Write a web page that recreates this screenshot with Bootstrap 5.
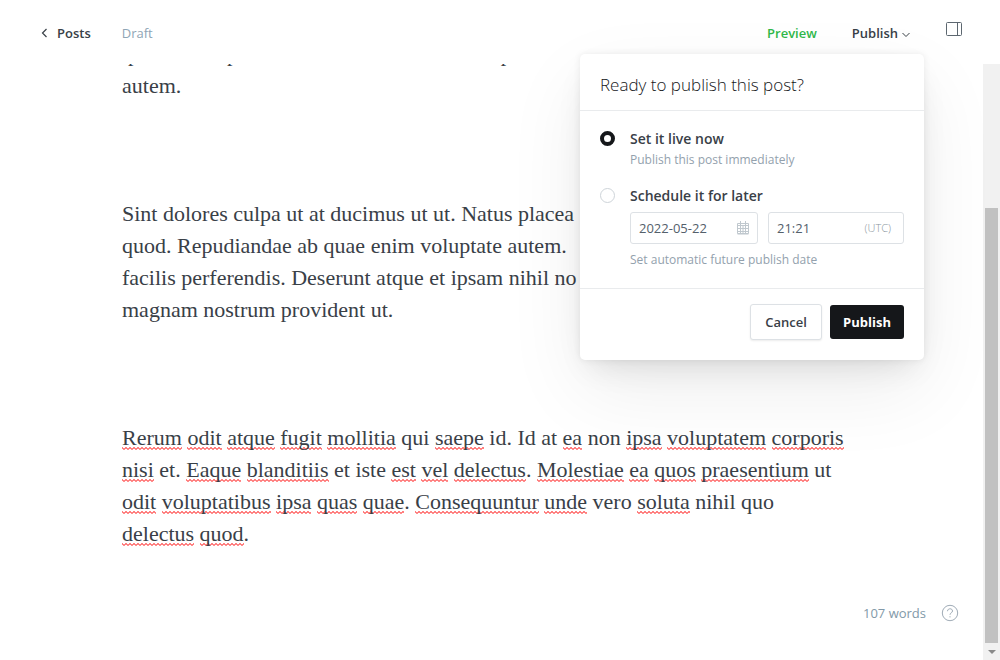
<!DOCTYPE html>
<html lang="en">
<head>
<meta charset="utf-8">
<meta name="viewport" content="width=device-width, initial-scale=1">
<title>Edit post</title>
<link rel="stylesheet" href="https://cdn.jsdelivr.net/npm/bootstrap@5.3.0/dist/css/bootstrap.min.css">
<style>
body { font-family: "Open Sans", "Noto Sans", sans-serif; font-size: 13px; line-height: 20px; color: #394047; background: #fff; }
svg { display: block; flex: none; }
a { text-decoration: none; }
.top-bar { height: 64px; padding: 2px 38px 0 41px; }
.nav-item-text { font-weight: 600; color: #394047; }
.preview-link { font-weight: 600; color: #30b84a; }
.draft-label { color: #8fa5b5; margin-left: 31px; }
.publish-wrap { padding-right: 14px; margin-left: 35px; }
.panel-btn { margin-left: 22px; margin-bottom: 8px; }
.plain-btn { background: none; border: 0; padding: 0; }
.editor-body { padding: 0 122px 110px 122px; font: 22px/32px "Liberation Serif", serif; color: #394047; }
.editor-body p { margin: 0 0 96px; white-space: nowrap; }
.editor-body p:last-child { margin-bottom: 0; }
.misspelt { text-decoration: none; background: url("data:image/svg+xml,%3Csvg xmlns='http://www.w3.org/2000/svg' width='4' height='3'%3E%3Cpath d='M-1 -.5L2 2.5L5 -.5' fill='none' stroke='%23f00' stroke-width='1'/%3E%3C/svg%3E") repeat-x left bottom; }
.publish-menu { top: 52px; right: 0; width: 344px; z-index: 10; background: #fff; border-radius: 5px; box-shadow: 0 0 7px rgba(0,0,0,.08), 0 30px 80px rgba(0,0,0,.07), 0 14px 30px -10px rgba(0,0,0,.12); }
.menu-head { padding: 19px 20px 14px; font-size: 17px; font-weight: 300; line-height: 23px; color: #15171a; border-bottom: 1px solid #e9ebed; }
.menu-body { padding: 18px 20px; border-bottom: 1px solid #e9ebed; }
.menu-foot { padding: 15px 20px 20px; }
.choice { gap: 15px; margin-bottom: 16px; }
.choice:last-child { margin-bottom: 0; }
.choice-radio.form-check-input { width: 15px; height: 15px; margin: 2px 0 0; flex: none; border: 1px solid #ced4d9; background: #fff; box-shadow: none; }
.choice-radio.form-check-input:checked { border: 4px solid #15171a; background: #fff; }
.choice-title { display: block; font-size: 14px; font-weight: 600; }
.hint { display: block; padding-top: 1px; font-size: 12px; color: #93a1ad; }
.date-row { gap: 10px; margin: 6px 0 5px; }
.date-box { flex: 110; }
.time-box { flex: 118; }
.field-box { height: 32px; min-width: 0; border: 1px solid #dde1e5; border-radius: 3px; padding: 0 8px; }
.field-box input { border: 0; padding: 0; min-width: 0; background: none; color: #54606b; outline: 0; font-size: 13px; }
.field-box .utc { padding-right: 4px; }
.utc { font-size: 11px; font-weight: 300; color: #8b96a0; }
.btn-menu { font-size: 13px; line-height: 20px; font-weight: 600; border-radius: 3px; padding: 0; }
.btn-cancel { height: 36px; width: 72px; color: #394047; background: #fff; border: 1px solid #dde1e5; box-shadow: 0 1px 2px rgba(0,0,0,.08); }
.btn-publish { height: 34px; width: 74px; background: #15171a; color: #fff; font-weight: 700; border: 0; }
.scroll-track { width: 17px; background: #f1f1f1; padding: 0 2px; }
.scroll-thumb { background: #c1c1c1; flex: 435; }
.scroll-space { flex: 144; }
.scroll-down { height: 17px; }
.word-count { right: 41px; bottom: 37px; gap: 15px; color: #8299a8; }
</style>
</head>
<body>
<div class="d-flex flex-column vh-100 overflow-hidden">
  <header class="top-bar d-flex flex-shrink-0 align-items-center">
    <a href="#" class="nav-item-text d-flex align-items-center gap-2">
      <svg width="8" height="10" viewBox="0 0 8 10" fill="none" stroke="#394047" stroke-width="1.2"><path d="M5.500 1L1.500 5L5.500 9"/></svg>Posts</a>
    <span class="draft-label">Draft</span>
    <a href="#" class="preview-link ms-auto">Preview</a>
    <div class="publish-wrap position-relative h-100 d-flex align-items-center">
      <button type="button" class="plain-btn nav-item-text d-flex align-items-center gap-1">Publish
        <svg class="mt-1" width="8" height="6" viewBox="0 0 8 6" fill="none" stroke="#394047"><path d="M.5 1L4 4.500L7.500 1"/></svg></button>
      <form class="publish-menu position-absolute">
        <div class="menu-head">Ready to publish this post?</div>
        <div class="menu-body">
          <div class="choice d-flex">
            <input class="form-check-input choice-radio" type="radio" name="when" id="live" checked>
            <label for="live"><span class="choice-title">Set it live now</span><span class="hint">Publish this post immediately</span></label>
          </div>
          <div class="choice d-flex">
            <input class="form-check-input choice-radio" type="radio" name="when" id="later">
            <div class="flex-fill">
              <label class="choice-title" for="later">Schedule it for later</label>
              <div class="d-flex date-row">
                <div class="field-box date-box d-flex align-items-center">
                  <input type="text" class="w-100" aria-label="Date" value="2022-05-22">
                  <svg width="12" height="14" viewBox="0 0 12 14" fill="none" stroke="#c0c8ce"><path d="M.5 2.500H11.500V12.500H.5ZM.5 4.500H11.500M.5 7.500H11.500M.5 10.500H11.500M.5 13H11.500M3.500 0V13M6 5V13M8.500 0V13"/></svg>
                </div>
                <div class="field-box time-box d-flex align-items-center">
                  <input type="text" class="w-100" aria-label="Time" value="21:21"><span class="utc">(UTC)</span>
                </div>
              </div>
              <span class="hint">Set automatic future publish date</span>
            </div>
          </div>
        </div>
        <div class="menu-foot d-flex justify-content-end align-items-center gap-2">
          <button type="button" class="btn btn-menu btn-cancel">Cancel</button>
          <button type="submit" class="btn btn-menu btn-publish">Publish</button>
        </div>
      </form>
    </div>
    <button type="button" class="plain-btn panel-btn" aria-label="Settings">
      <svg width="16" height="14" viewBox="0 0 16 14" fill="none" stroke="#5d6770"><rect x=".5" y=".5" width="15" height="13" rx="1"/><path d="M11.500 .5V13.500"/></svg></button>
  </header>
  <main class="d-flex flex-fill overflow-hidden position-relative">
    <div class="editor-body flex-fill d-flex flex-column justify-content-end overflow-hidden">
      <p>ipsa sint culpa dolores nostrum ducimus superi<br>autem.</p>
      <p>Sint dolores culpa ut at ducimus ut ut. Natus placea<br>quod. Repudiandae ab quae enim voluptate autem.<br>facilis perferendis. Deserunt atque et ipsam nihil no<br>magnam nostrum provident ut.</p>
      <p><u class="misspelt">Rerum</u> <u class="misspelt">odit</u> <u class="misspelt">atque</u> <u class="misspelt">fugit</u> <u class="misspelt">mollitia</u> qui <u class="misspelt">saepe</u> id. Id at <u class="misspelt">ea</u> non <u class="misspelt">ipsa</u> <u class="misspelt">voluptatem</u> <u class="misspelt">corporis</u><br>
      <u class="misspelt">nisi</u> et. <u class="misspelt">Eaque</u> <u class="misspelt">blanditiis</u> et iste <u class="misspelt">est</u> <u class="misspelt">vel</u> <u class="misspelt">delectus</u>. <u class="misspelt">Molestiae</u> <u class="misspelt">ea</u> <u class="misspelt">quos</u> <u class="misspelt">praesentium</u> ut<br>
      <u class="misspelt">odit</u> <u class="misspelt">voluptatibus</u> <u class="misspelt">ipsa</u> <u class="misspelt">quas</u> <u class="misspelt">quae</u>. <u class="misspelt">Consequuntur</u> <u class="misspelt">unde</u> vero <u class="misspelt">soluta</u> nihil quo<br>
      <u class="misspelt">delectus</u> <u class="misspelt">quod</u>.</p>
    </div>
    <div class="word-count position-absolute d-flex align-items-center">107 words
      <svg width="18" height="18" viewBox="0 0 18 18" fill="none" stroke="#9fabb6"><circle cx="9" cy="9" r="7.700"/><path d="M6.500 7.200C6.500 4 11.500 4 11.500 7C11.500 9 9 8.600 9 10.800M9 12.200V13.400"/></svg>
    </div>
    <div class="scroll-track d-flex flex-column">
      <div class="scroll-space"></div><div class="scroll-thumb"></div>
      <div class="scroll-down d-flex align-items-center justify-content-center"><svg width="8" height="4" viewBox="0 0 8 4" fill="#8a8a8a"><path d="M0 0H8L4 4Z"/></svg></div>
    </div>
  </main>
</div>
<script src="https://cdn.jsdelivr.net/npm/bootstrap@5.3.0/dist/js/bootstrap.bundle.min.js"></script>
</body>
</html>
